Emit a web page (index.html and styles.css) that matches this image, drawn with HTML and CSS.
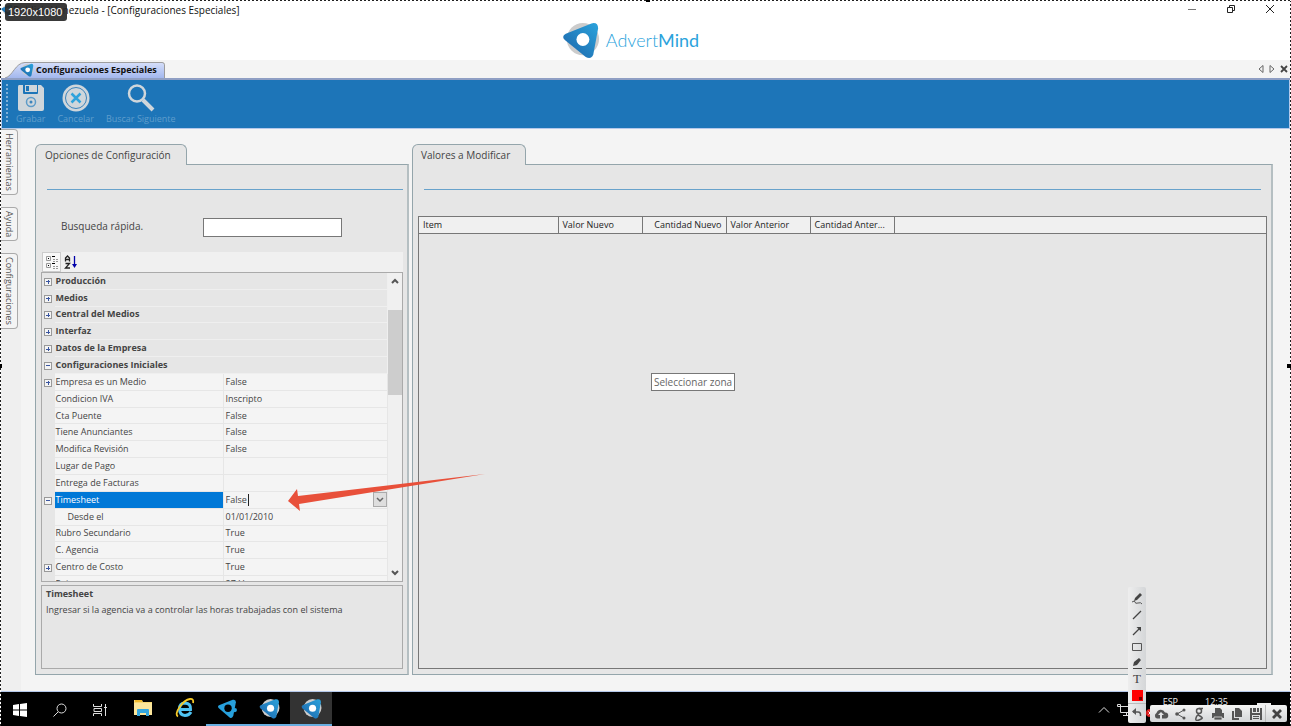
FILE: index.html
```
<!DOCTYPE html>
<html lang="es">
<head>
  <meta charset="UTF-8">
  <title>AdvertMind - Configuraciones Especiales</title>
  <link rel="stylesheet" href="styles.css">
</head>
<body>
<svg class="defs" width="0" height="0">
  <defs>
    <linearGradient id="blue" x1="1" y1="0" x2="0" y2="1">
      <stop offset="0" stop-color="#2ba3dc"/>
      <stop offset="1" stop-color="#1c63a8"/>
    </linearGradient>
    <symbol id="mind" viewBox="0 0 40 40">
      <circle cx="22" cy="19" r="17" fill="#ccc"/>
      <path d="M4 13.500 L31 2.500 Q38 1 38 8 L33 35 Q31 41 25 38 L3 20 Q-1 16 4 13.500Z" fill="url(#blue)"/>
      <circle cx="22" cy="19.500" r="6.800" fill="#fff"/>
    </symbol>
  </defs>
</svg>

<header class="titlebar">
  <div class="window-title">
    <svg width="12" height="12"><use href="#mind"/></svg>
    <span>Publicis Venezuela - [Configuraciones Especiales]</span>
  </div>
  <div class="brand">
    <svg width="38" height="38"><use href="#mind"/></svg>
    <span>Advert<b>Mind</b></span>
  </div>
  <div class="window-buttons">
    <button type="button" aria-label="Minimizar"><svg width="10" height="10"><path d="M1 5.500h8" stroke="#777"/></svg></button>
    <button type="button" aria-label="Restaurar"><svg width="10" height="10" fill="none" stroke="#222"><path d="M1.500 3.500h5v5h-5zM3.500 3V1.500h5v5H7"/></svg></button>
    <button type="button" aria-label="Cerrar"><svg width="10" height="10" stroke="#222"><path d="M1 1l8 8M9 1l-8 8"/></svg></button>
  </div>
</header>

<nav class="doc-tabs">
  <a href="#" class="doc-tab">
    <svg class="tab-shape" viewBox="0 0 160 17" preserveAspectRatio="none"><path d="M0 17C8 15 10 1 20 .5H157Q159.500 .5 159.500 3V17" fill="url(#tab)" stroke="#999"/><linearGradient id="tab" x1="0" y1="0" x2="0" y2="1"><stop offset="0" stop-color="#d6dffa"/><stop offset="1" stop-color="#a3b8ee"/></linearGradient></svg>
    <svg class="tab-icon" width="14" height="14"><use href="#mind"/></svg>
    <span>Configuraciones Especiales</span>
  </a>
  <div class="tab-arrows">
    <button type="button" aria-label="Anterior"><svg width="6" height="8" fill="none" stroke="#666"><path d="M5 .5v7L1 4z"/></svg></button>
    <button type="button" aria-label="Siguiente"><svg width="6" height="8" fill="none" stroke="#666"><path d="M1 .5v7L5 4z"/></svg></button>
    <button type="button" aria-label="Cerrar pestaña"><svg width="8" height="8" stroke="#444" stroke-width="1.800"><path d="M1 1l6 6M7 1L1 7"/></svg></button>
  </div>
</nav>

<div class="toolbar">
  <button type="button">
    <svg width="28" height="28" viewBox="0 0 28 28"><path d="M2 1h4v8q0 1 1 1h13q1 0 1-1V1h3l3 3v21q0 2-2 2H3q-2 0-2-2V3q0-2 1-2z" fill="#cfd6db"/><path d="M8 1h12v7H8z" fill="#cfd6db"/><path d="M9 2h3v5H9z" fill="#1d75b8"/><circle cx="14" cy="18" r="4.500" fill="none" stroke="#5d9bc8" stroke-width="1.500"/><circle cx="14" cy="18" r="1.500" fill="#3c84bc"/></svg>
    <span>Grabar</span>
  </button>
  <button type="button">
    <svg width="28" height="28" viewBox="0 0 28 28"><circle cx="14" cy="14" r="13.500" fill="#cfd6db"/><circle cx="14" cy="14" r="10.500" fill="none" stroke="#3c84bc"/><path d="M9.500 9.500l9 9M18.500 9.500l-9 9" stroke="#2fa3dc" stroke-width="2.500"/></svg>
    <span>Cancelar</span>
  </button>
  <button type="button">
    <svg width="28" height="28" viewBox="0 0 28 28"><circle cx="10" cy="9.500" r="8" fill="none" stroke="#cfd6db" stroke-width="2.500"/><path d="M16 16l10 10" stroke="#cfd6db" stroke-width="4"/></svg>
    <span>Buscar Siguiente</span>
  </button>
</div>

<main class="workspace">
  <aside class="dock">
    <button type="button">Herramientas</button>
    <button type="button">Ayuda</button>
    <button type="button">Configuraciones</button>
  </aside>

  <section class="panel">
    <h2 class="panel-tab">Opciones de Configuración</h2>
    <div class="panel-body">
      <hr>
      <div class="search">
        <label for="quick">Busqueda rápida.</label>
        <input type="text" id="quick">
      </div>
      <div class="sort-bar">
        <button type="button" class="pressed" aria-label="Por categorías"><svg width="14" height="14" fill="none" stroke="#999"><path d="M1.500 1.500h4v4h-4zM1.500 8.500h4v4h-4z"/><path d="M3 3.500h1M3 10.500h1M7 1.500h3M7 8.500h3" stroke="#000"/><path d="M8 4.500h5M8 6.500h5M8 11.500h5M8 13.500h5" stroke-dasharray="2 1"/></svg></button>
        <button type="button" aria-label="Alfabético"><svg width="14" height="14" fill="none" stroke="#222" stroke-width="1.300"><path d="M1.500 6.500V3l2-2 2 2v3.500M1.500 4.500h4M1.500 8.500h4l-4 4.500h4.500"/><path d="M10.500 1v9" stroke="#00a"/><path d="M8 9h5l-2.500 4z" fill="#00a" stroke="none"/></svg></button>
      </div>
      <div class="props">
        <div class="props-view">
          <table class="props-table">
            <colgroup><col class="c-gutter"><col class="c-name"><col></colgroup>
            <tbody>
              <tr class="cat"><td><button type="button" class="exp plus" aria-label="Expandir"></button></td><th colspan="2">Producción</th></tr>
              <tr class="cat"><td><button type="button" class="exp plus" aria-label="Expandir"></button></td><th colspan="2">Medios</th></tr>
              <tr class="cat"><td><button type="button" class="exp plus" aria-label="Expandir"></button></td><th colspan="2">Central del Medios</th></tr>
              <tr class="cat"><td><button type="button" class="exp plus" aria-label="Expandir"></button></td><th colspan="2">Interfaz</th></tr>
              <tr class="cat"><td><button type="button" class="exp plus" aria-label="Expandir"></button></td><th colspan="2">Datos de la Empresa</th></tr>
              <tr class="cat"><td><button type="button" class="exp" aria-label="Contraer"></button></td><th colspan="2">Configuraciones Iniciales</th></tr>
              <tr><td><button type="button" class="exp plus" aria-label="Expandir"></button></td><th>Empresa es un Medio</th><td>False</td></tr>
              <tr><td></td><th>Condicion IVA</th><td>Inscripto</td></tr>
              <tr><td></td><th>Cta Puente</th><td>False</td></tr>
              <tr><td></td><th>Tiene Anunciantes</th><td>False</td></tr>
              <tr><td></td><th>Modifica Revisión</th><td>False</td></tr>
              <tr><td></td><th>Lugar de Pago</th><td></td></tr>
              <tr><td></td><th>Entrega de Facturas</th><td></td></tr>
              <tr class="selected"><td><button type="button" class="exp" aria-label="Contraer"></button></td><th>Timesheet</th><td>
                <div class="combo"><input type="text" value="False" aria-label="Timesheet"><button type="button" aria-label="Abrir lista"><svg width="8" height="6" fill="none" stroke="#666" stroke-width="1.500"><path d="M1 1l3 3 3-3"/></svg></button></div>
              </td></tr>
              <tr class="child"><td></td><th>Desde el</th><td>01/01/2010</td></tr>
              <tr><td></td><th>Rubro Secundario</th><td>True</td></tr>
              <tr><td></td><th>C. Agencia</th><td>True</td></tr>
              <tr><td><button type="button" class="exp plus" aria-label="Expandir"></button></td><th>Centro de Costo</th><td>True</td></tr>
              <tr><td><button type="button" class="exp plus" aria-label="Expandir"></button></td><th>Pais</th><td>27-V</td></tr>
            </tbody>
          </table>
        </div>
        <div class="scrollbar">
          <button type="button" aria-label="Subir"><svg width="8" height="6" fill="none" stroke="#555" stroke-width="2"><path d="M1 5l3-3 3 3"/></svg></button>
          <div class="track"><div class="thumb"></div></div>
          <button type="button" aria-label="Bajar"><svg width="8" height="6" fill="none" stroke="#555" stroke-width="2"><path d="M1 1l3 3 3-3"/></svg></button>
        </div>
      </div>
      <div class="help">
        <h3>Timesheet</h3>
        <p>Ingresar si la agencia va a controlar las horas trabajadas con el sistema</p>
      </div>
    </div>
  </section>

  <section class="panel values">
    <h2 class="panel-tab">Valores a Modificar</h2>
    <div class="panel-body">
      <hr>
      <div class="list">
        <table class="list-table">
          <thead>
            <tr><th class="item">Item</th><th>Valor Nuevo</th><th class="num">Cantidad Nuevo</th><th>Valor Anterior</th><th>Cantidad Anter...</th><th class="rest"></th></tr>
          </thead>
        </table>
      </div>
    </div>
  </section>
</main>

<footer class="taskbar">
  <div class="system">
    <button type="button" aria-label="Inicio"><svg width="14" height="14" fill="#fff"><path d="M0 2l6-1v5.500H0zM7 1l7-1v6.500H7zM0 7.500h6V13l-6-1zM7 7.500h7V14l-7-1z"/></svg></button>
    <button type="button" aria-label="Buscar"><svg width="14" height="14" fill="none" stroke="#ddd"><circle cx="8.500" cy="5.500" r="4.500"/><path d="M5 9l-4.500 4.500"/></svg></button>
    <button type="button" aria-label="Vista de tareas"><svg width="14" height="14" fill="none" stroke="#ddd"><path d="M.5 1v2.500h8V1M.5 13v-2.500h8V13M1 5.500h7.500v3H1zM12.500 1v12M11 4.500h3"/></svg></button>
  </div>
  <div class="apps">
    <button type="button" aria-label="Explorador"><svg width="20" height="18"><path d="M1 1h8l1 2h9v13H1z" fill="#f7d774"/><path d="M1 4h18v12H1z" fill="#fce69b"/><path d="M2 1h7v2H2z" fill="#f0b92c"/><path d="M4 17v-6q0-1 1-1h10q1 0 1 1v6h-3v-3H7v3z" fill="#35a7e0"/></svg></button>
    <button type="button" aria-label="Internet Explorer"><svg width="20" height="20" fill="none"><path d="M16 14q-2 3.500-6 3.500-5.500-.5-5.500-6.500t5.500-6q6 .5 5.500 6.500H5" stroke="#4fc3f2" stroke-width="3"/><path d="M3 18.500C-2 16 8 2 15 1q4-.5 3 4" stroke="#f6c927" stroke-width="1.800"/></svg></button>
    <button type="button" class="open" aria-label="AdvertMind"><svg width="21" height="21" viewBox="0 0 40 40"><path d="M5 13.500 L30 3.500 Q36 2 36 8 L31 34 Q29 40 24 37 L3 19 Q0 15.500 5 13.500Z" fill="#27a0dc"/><circle cx="34" cy="23" r="4" fill="#27a0dc"/><circle cx="21" cy="19.500" r="7" fill="#000"/></svg></button>
    <button type="button" class="open" aria-label="AdvertMind 2"><svg width="21" height="21"><use href="#mind"/></svg></button>
    <button type="button" class="open active" aria-label="AdvertMind 3"><svg width="21" height="21"><use href="#mind"/></svg></button>
  </div>
  <div class="tray">
    <svg width="12" height="8" fill="none" stroke="#ddd"><path d="M1 6.500l5-5 5 5"/></svg>
    <svg width="14" height="12" fill="none" stroke="#ddd"><path d="M3 2.500h11M3.500 3v5.500H14M9.500 9v2M6 11.500h7M.5 .5h3v2h-3z"/></svg>
    <svg class="muted" width="8" height="8"><circle cx="4" cy="4" r="4" fill="#e02020"/><path d="M2.500 2.500l3 3M5.500 2.500l-3 3" stroke="#fff"/></svg>
    <span class="lang">ESP</span>
    <span class="clock">12:35</span>
    <svg class="notes" width="14" height="14"><path d="M0 0h14v10h-4l-3 3-1-3H0z" fill="#eee"/></svg>
  </div>
</footer>

<!-- capture tool -->
<svg class="arrow" width="198" height="38"><path d="M0 27L9 15l1 7L197 0 11 30l1 7z" fill="#e8503a"/></svg>
<div class="tip">Seleccionar zona</div>
<div class="size">1920x1080</div>

<div class="draw-tools">
  <button type="button" aria-label="Lápiz"><svg width="12" height="12"><path d="M3 8l1-3 5-5 2 2-5 5z" fill="#444"/><path d="M1 9q3-2 3 0t3 1 4 1" fill="none" stroke="#555"/></svg></button>
  <button type="button" aria-label="Línea"><svg width="12" height="12"><path d="M2 10l8-8" stroke="#444" stroke-width="1.300"/></svg></button>
  <button type="button" aria-label="Flecha"><svg width="12" height="12"><path d="M2 10l7-7" stroke="#444" stroke-width="1.300"/><path d="M5.500 2H10v4.500z" fill="#444"/></svg></button>
  <button type="button" aria-label="Rectángulo"><svg width="12" height="12"><path d="M1.500 2.500h9v7h-9z" fill="none" stroke="#555"/></svg></button>
  <button type="button" aria-label="Marcador"><svg width="12" height="12"><path d="M2 9l1-4 5-4 2 2-4 5z" fill="#444"/><path d="M2 11.500h9" stroke="#444"/></svg></button>
  <button type="button" class="text-tool" aria-label="Texto">T</button>
  <button type="button" aria-label="Color"><svg width="12" height="12"><path d="M1 1h11v11H1z" fill="#f00"/><path d="M8 8h3v3H8z" fill="#700"/></svg></button>
  <button type="button" class="undo" aria-label="Deshacer"><svg width="12" height="12"><path d="M2 5h5q3 0 2.500 4" fill="none" stroke="#555" stroke-width="1.500"/><path d="M5 1v7L1 4.500z" fill="#555"/></svg></button>
</div>
<div class="save-tools">
  <button type="button" aria-label="Subir a la nube"><svg width="16" height="12" fill="#555"><path d="M4 10.500a3 3 0 0 1-.5-5.500 4.500 4.500 0 0 1 8.500-.5 3 3 0 0 1 .5 6H9V7h2L8 4 5 7h2v3.500z"/></svg></button>
  <button type="button" aria-label="Compartir"><svg width="12" height="12"><path d="M10 2L3 6l7 4" fill="none" stroke="#555"/><circle cx="10" cy="2" r="1.500" fill="#555"/><circle cx="3" cy="6" r="1.800" fill="#555"/><circle cx="10" cy="10" r="1.500" fill="#555"/></svg></button>
  <button type="button" aria-label="Buscar en Google"><svg width="12" height="14" fill="none" stroke="#555" stroke-width="1.500"><circle cx="6" cy="4" r="2.500"/><path d="M6 1.500h4M6 6.500q-2 1 0 2t3 2-3 2.500-3-2 2-2"/></svg></button>
  <button type="button" aria-label="Imprimir"><svg width="12" height="12" fill="#555"><path d="M3 0h5l2 2v3H3zM0 5h12v5H0z"/><path d="M2 9h8v3H2z" stroke="#ddd" stroke-width=".8"/></svg></button>
  <button type="button" aria-label="Copiar"><svg width="12" height="12" fill="#555"><path d="M4 0h4l3 3v6H4z"/><path d="M1 3h2v7h5v2H1z"/></svg></button>
  <button type="button" aria-label="Guardar"><svg width="12" height="12" fill="#555"><path d="M0 0h2v5h8V0h2v12h-2V7H2v5H0z"/><path d="M3 0h3v4H3zM7 0h2v4H7zM3 8h6v1H3zM3 10h6v1H3z"/></svg></button>
  <button type="button" class="close" aria-label="Cerrar captura"><svg width="12" height="12" stroke="#444" stroke-width="2.800"><path d="M2 2l8 8M10 2l-8 8"/></svg></button>
</div>
<div class="selection"><i class="h-top"></i><i class="h-left"></i><i class="h-right"></i><i class="h-bottom"></i></div>
</body>
</html>
```
FILE: styles.css
```
* {
  box-sizing: border-box;
}

body {
  position: relative;
  display: flex;
  flex-direction: column;
  min-height: 100vh;
  margin: 0;
  background: #f4f4f4;
  color: #444;
  font-family: "Open Sans", "Noto Sans", sans-serif;
  font-size: 9px;
  line-height: 12px;
}

button {
  display: flex;
  align-items: center;
  justify-content: center;
  margin: 0;
  padding: 0;
  border: 0;
  background: none;
  color: inherit;
  font: inherit;
}

input {
  font: inherit;
  color: inherit;
}

h2, h3, p {
  margin: 0;
  font-size: inherit;
}

.defs {
  position: absolute;
}

/* title bar */
.titlebar {
  display: grid;
  grid-template-columns: 1fr auto 1fr;
  height: 60px;
  background: #fff;
}

.window-title {
  display: flex;
  align-items: flex-start;
  padding: 4px 0 0 1px;
  color: #111;
  font-size: 10px;
}

.brand {
  display: flex;
  align-items: center;
  gap: 6px;
  padding-top: 20px;
  margin-right: 30px;
  color: #2ba3dc;
  font-family: Lato, sans-serif;
  font-size: 18px;
  font-weight: 300;
}

.window-buttons {
  display: flex;
  justify-content: flex-end;
  align-items: flex-start;
  gap: 29px;
  padding: 4px 16px 0 0;
}

/* document tabs */
.doc-tabs {
  display: flex;
  justify-content: space-between;
  height: 20px;
  padding: 2px 3px 0 5px;
  border-bottom: 2px solid #8f9fc4;
}

.doc-tab {
  position: relative;
  display: flex;
  align-items: center;
  gap: 2px;
  width: 160px;
  padding-left: 15px;
  color: #111;
  font-weight: bold;
  text-decoration: none;
  white-space: nowrap;
}

.doc-tab span, .tab-icon {
  position: relative;
}

.tab-shape {
  position: absolute;
  top: 0;
  left: 0;
  width: 100%;
  height: 100%;
}

.tab-arrows {
  display: flex;
  gap: 5px;
  height: 13px;
}

/* toolbar */
.toolbar {
  display: flex;
  height: 48px;
  gap: 12px;
  padding: 4px 14px 0;
  border-left: 2px solid #b4c8ea;
  border-right: 2px solid #b4c8ea;
  background: #1d75b8;
  color: #5f9dcc;
}

.toolbar::before {
  content: "";
  width: 2px;
  height: 38px;
  margin: 0 -4px 0 -10px;
  background: repeating-linear-gradient(#7fb0d8 0 2px, #1d75b8 2px 4px);
}

.toolbar button {
  flex-direction: column;
  justify-content: flex-start;
  gap: 1px;
}

/* workspace */
.workspace {
  flex: 1;
  display: grid;
  grid-template-columns: 20px 373px 1fr;
  padding-right: 17px;
  border: 1px solid #b4c8ea;
}

.dock {
  display: flex;
  flex-direction: column;
  align-items: flex-start;
  gap: 12px;
  background: #efefef;
}

.dock button {
  width: 17px;
  padding: 3px 0;
  border: 1px solid #aaa;
  border-left: 0;
  border-radius: 0 4px 4px 0;
  background: #f4f4f4;
  color: #555;
  writing-mode: vertical-rl;
}

.panel {
  display: flex;
  flex-direction: column;
  align-items: flex-start;
  margin: 15px -15px 16px 14px;
}

.panel.values {
  margin: 15px 0 16px 18px;
}

.panel-tab {
  position: relative;
  height: 21px;
  margin-bottom: -1px;
  padding: 4px 15px 0 9px;
  border: 1px solid #94a5ab;
  border-bottom: 0;
  border-radius: 6px 6px 0 0;
  background: #e6e6e6;
  font-size: 10px;
  font-weight: normal;
}

.values .panel-tab {
  padding-left: 8px;
}

.panel-body {
  flex: 1;
  display: flex;
  flex-direction: column;
  align-self: stretch;
  padding: 0 4px 5px 5px;
  border: 1px solid #94a5ab;
  border-right: 2px solid #b5bfc2;
  background: #e6e6e6;
}

.panel-body hr {
  width: auto;
  margin: 24px 0 0 6px;
  border: 0;
  border-top: 1px solid #68a2cb;
}

.values .panel-body hr {
  margin: 24px 6px 0;
}

.search {
  display: flex;
  padding: 28px 0 15px 20px;
  font-size: 10px;
}

.search label {
  width: 142px;
  padding-top: 2px;
}

.search input {
  width: 139px;
  height: 19px;
  border: 1px solid #777;
  background: #fff;
}

.sort-bar {
  display: flex;
  height: 20px;
  margin-left: 1px;
  background: #f0f0f0;
}

.sort-bar button {
  width: 19px;
}

.sort-bar .pressed {
  border: 1px solid #ccc;
  background: #f8f8f8;
}

/* property grid */
.props {
  flex: 1;
  display: flex;
  min-height: 0;
  border: 1px solid #aaa;
}

.props-view {
  flex: 1;
  height: 308px;
  overflow: hidden;
}

.props-table {
  width: 100%;
  height: 320px;
  table-layout: fixed;
  border-collapse: collapse;
  background: #f4f4f4;
}

.c-gutter {
  width: 12px;
}

.c-name {
  width: 169px;
}

.props-table td, .props-table th {
  padding: 0 2px;
  border-bottom: 1px solid #e6e6e6;
  border-right: 1px solid #e6e6e6;
  font-weight: normal;
  text-align: left;
  white-space: nowrap;
}

.props-table th {
  padding-left: 1px;
}

.props-table tr > :first-child {
  padding: 2px 0 0 2px;
  border-color: #e6e6e6;
  background: #e6e6e6;
}

.props-table .cat th {
  border-color: #efefef;
  background: #e6e6e6;
  font-weight: bold;
}

.props-table .child th {
  padding-left: 13px;
}

.props-table .selected th {
  background: #0078d7;
  color: #fff;
}

.props-table .selected td {
  padding-right: 0;
}

.exp {
  width: 8px;
  height: 8px;
  border: 1px solid #999;
  background: linear-gradient(#3a55a0, #3a55a0) center / 4px 1px no-repeat #f4f4f4;
}

.exp.plus {
  background: linear-gradient(#3a55a0, #3a55a0) center / 4px 1px no-repeat,
    linear-gradient(#3a55a0, #3a55a0) center / 1px 4px no-repeat #f4f4f4;
}

.combo {
  display: flex;
  justify-content: space-between;
  align-items: center;
  height: 12px;
}

.combo input {
  width: 23px;
  height: 12px;
  padding: 0;
  border: 0;
  border-right: 1px solid #222;
  background: none;
}

.combo button {
  width: 14px;
  height: 15px;
  border: 1px solid #aaa;
  background: #dedede;
}

.scrollbar {
  display: flex;
  flex-direction: column;
  width: 14px;
  background: #f0f0f0;
}

.scrollbar button {
  height: 16px;
}

.track {
  flex: 1;
  padding-top: 21px;
}

.thumb {
  height: 85px;
  background: #cdcdcd;
}

.help {
  height: 84px;
  margin-top: 3px;
  padding: 2px 4px;
  border: 1px solid #aaa;
}

.help p {
  margin-top: 4px;
}

/* values list */
.list {
  flex: 1;
  margin-top: 26px;
  border: 1px solid #777;
}

.list-table {
  width: 100%;
  table-layout: fixed;
  border-collapse: collapse;
  color: #222;
}

.list-table th {
  width: 84px;
  height: 16px;
  padding: 0 4px;
  overflow: hidden;
  border-right: 1px solid #777;
  border-bottom: 1px solid #777;
  background: #f0f0f0;
  font-weight: normal;
  text-align: left;
  text-overflow: ellipsis;
  white-space: nowrap;
}

.list-table .item {
  width: 139px;
}

.list-table .num {
  text-align: right;
}

.list-table .rest {
  width: auto;
  border-right: 0;
}

/* taskbar */
.taskbar {
  display: flex;
  height: 35px;
  background: #000;
  color: #eee;
}

.system, .apps {
  display: flex;
}

.system button {
  width: 40px;
}

.apps {
  margin-left: 2px;
}

.apps button {
  width: 42px;
  border-bottom: 3px solid transparent;
}

.apps .open {
  border-bottom-color: #68aee0;
}

.apps .active {
  background: #333;
}

.tray {
  display: flex;
  align-items: center;
  margin-left: auto;
  padding-right: 20px;
  gap: 7px;
}

.lang, .clock {
  align-self: flex-start;
  padding-top: 4px;
}

.muted {
  margin: 6px 2px 0 8px;
}

.clock {
  margin-left: 20px;
}

.notes {
  margin-left: 22px;
}

/* capture tool, drawn over the desktop */
.arrow {
  position: absolute;
  top: 474px;
  left: 288px;
}

.tip {
  position: absolute;
  top: 373px;
  left: 651px;
  padding: 2px;
  border: 1px solid #777;
  background: #fff;
  color: #666;
  font-size: 10px;
}

.size {
  position: absolute;
  top: 3px;
  left: 5px;
  padding: 3px 5px 3px 3px;
  border-radius: 3px;
  background: rgba(40, 40, 40, .92);
  color: #fff;
  font: 11px/12px "Liberation Sans", sans-serif;
}

.draw-tools, .save-tools {
  position: absolute;
  display: flex;
  border-radius: 2px;
  background: linear-gradient(#f4f4f4, #d4d6d8);
}

.draw-tools {
  right: 145px;
  bottom: 4px;
  flex-direction: column;
  width: 18px;
  padding: 4px 0 2px;
  background: linear-gradient(90deg, #eee, #d4d6d8);
}

.draw-tools button {
  height: 16px;
}

.draw-tools .text-tool {
  color: #444;
  font: 13px/16px "Liberation Serif", serif;
}

.draw-tools .undo {
  height: 18px;
  border-top: 1px solid #bbb;
}

.save-tools {
  right: 4px;
  bottom: 5px;
  height: 17px;
  padding-left: 1px;
}

.save-tools button {
  width: 19px;
}

.save-tools .close {
  width: 22px;
  border-left: 1px solid #bbb;
}

.selection {
  position: absolute;
  inset: 0;
  pointer-events: none;
  background:
    repeating-linear-gradient(90deg, #222 0 2px, #fff 2px 4px) top / 100% 1px no-repeat,
    repeating-linear-gradient(90deg, #222 0 2px, #fff 2px 4px) bottom / 100% 1px no-repeat,
    repeating-linear-gradient(#222 0 2px, #fff 2px 4px) left / 1px 100% no-repeat,
    repeating-linear-gradient(#222 0 2px, #fff 2px 4px) right / 1px 100% no-repeat;
}

.selection i {
  position: absolute;
  width: 4px;
  height: 4px;
  background: #000;
}

.h-top { top: -2px; left: 50%; }
.h-left { top: 50%; left: -2px; }
.h-right { top: 50%; right: 0; }
.h-bottom { bottom: 0; left: 50%; }
```
